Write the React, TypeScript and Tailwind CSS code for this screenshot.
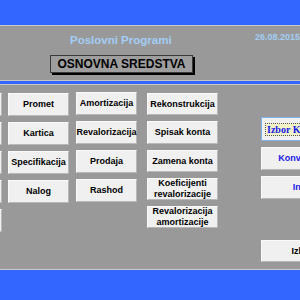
import React from "react";

const F = { fontFamily: '"Liberation Sans", Arial, sans-serif' };

function Btn({ children, className = "", text = "text-black" }: { children: React.ReactNode; className?: string; text?: string }) {
  return (
    <div
      className={`flex items-center justify-center text-center bg-[#f0f0f0] border border-t-[#fafafa] border-l-[#fafafa] border-b-[#b8b8b8] border-r-[#b8b8b8] font-bold text-[9px] leading-[11px] whitespace-nowrap ${text} ${className}`}
    >
      {children}
    </div>
  );
}

export default function App() {
  return (
    <div className="w-[300px] h-[300px] overflow-hidden flex flex-col bg-[#999999]" style={F}>
      {/* top blue */}
      <div className="h-[25px] shrink-0 bg-[#3366ff]" />
      <div className="h-[1px] shrink-0 bg-[#c8c8c8]" />
      {/* header */}
      <div className="h-[54px] shrink-0 flex flex-col">
        <div className="flex items-start mt-[7px]">
          <div className="ml-[70px] w-[112px] text-[11.5px] leading-[14px] font-bold text-[#a3cdf5] whitespace-nowrap">
            Poslovni Programi
          </div>
          <div className="ml-[76px] mt-[-1px] text-[9px] leading-[11px] font-bold text-[#a3cdf5] whitespace-nowrap">
            26.08.2015
          </div>
        </div>
        <div className="flex mt-[8px]">
          <div className="ml-[50px] w-[143px] h-[18px] flex items-center justify-center border border-[#3a3a3a] bg-[#9e9e9e] shadow-[2px_2px_0_#000] text-[12px] font-bold text-black whitespace-nowrap">
            OSNOVNA SREDSTVA
          </div>
        </div>
      </div>
      {/* separator */}
      <div className="h-[1px] shrink-0 bg-[#c8c8c8]" />
      <div className="h-[3px] shrink-0 bg-[#3366ff]" />
      <div className="h-[1px] shrink-0 bg-[#c8c8c8]" />
      {/* body */}
      <div className="flex-1 flex items-start">
        <div className="ml-[-59px] w-[61px] shrink-0 flex flex-col gap-[6px] pt-[8px]">
          <Btn className="h-[23px]"> </Btn>
          <Btn className="h-[23px]"> </Btn>
          <Btn className="h-[23px]"> </Btn>
          <Btn className="h-[23px]"> </Btn>
          <Btn className="h-[23px]"> </Btn>
        </div>
        <div className="ml-[6px] w-[61px] shrink-0 flex flex-col gap-[6px] pt-[8px]">
          <Btn className="h-[23px]">Promet</Btn>
          <Btn className="h-[23px]">Kartica</Btn>
          <Btn className="h-[23px]">Specifikacija</Btn>
          <Btn className="h-[23px]">Nalog</Btn>
        </div>
        <div className="ml-[7px] w-[61px] shrink-0 flex flex-col gap-[6px] pt-[7px]">
          <Btn className="h-[23px]">Amortizacija</Btn>
          <Btn className="h-[23px]">Revalorizacija</Btn>
          <Btn className="h-[23px]">Prodaja</Btn>
          <Btn className="h-[23px]">Rashod</Btn>
        </div>
        <div className="ml-[10px] w-[71px] shrink-0 flex flex-col gap-[6px] pt-[8px]">
          <Btn className="h-[22px]">Rekonstrukcija</Btn>
          <Btn className="h-[23px]">Spisak konta</Btn>
          <Btn className="h-[22px]">Zamena konta</Btn>
          <Btn className="h-[22px]">
            <span>Koeficijenti<br />revalorizacije</span>
          </Btn>
          <Btn className="h-[22px]">
            <span>Revalorizacija<br />amortizacije</span>
          </Btn>
        </div>
        <div className="ml-[43px] w-[80px] shrink-0 flex flex-col pt-[32px]">
          <div className="h-[24px] flex items-center justify-start pl-[3px] bg-[#f0f0f0] border border-[#7eb4ea] whitespace-nowrap">
            <span
              className="px-[1px] leading-[11px] border border-dotted border-[#555] bg-[#f2f2c8] text-[10px] font-bold text-[#1a1ae6]"
              style={{ fontFamily: '"Liberation Serif", "Times New Roman", serif' }}
            >
              Izbor Kompanije
            </span>
          </div>
          <Btn className="h-[23px] mt-[6px]" text="text-[#1a1ae6]">Konverzija</Btn>
          <Btn className="h-[23px] mt-[6px]" text="text-[#1a1ae6]">Info</Btn>
          <Btn className="h-[22px] mt-[41px]">Izlaz</Btn>
        </div>
      </div>
      {/* bottom */}
      <div className="h-[1px] shrink-0 bg-[#c8c8c8]" />
      <div className="h-[30px] shrink-0 bg-[#3366ff]" />
    </div>
  );
}
